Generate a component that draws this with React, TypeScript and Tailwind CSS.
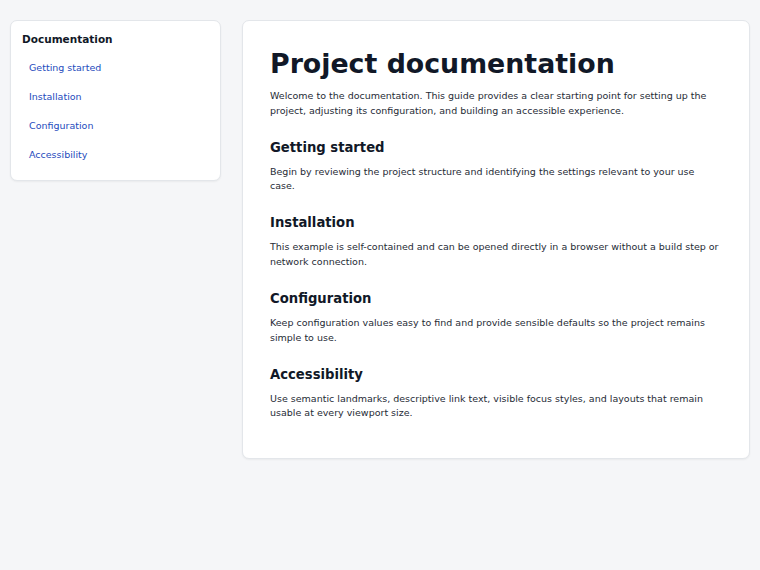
const LINKS = ["Getting started", "Installation", "Configuration", "Accessibility"];

const SECTIONS = [
  {
    title: "Getting started",
    body: "Begin by reviewing the project structure and identifying the settings relevant to your use case.",
  },
  {
    title: "Installation",
    body: "This example is self-contained and can be opened directly in a browser without a build step or network connection.",
  },
  {
    title: "Configuration",
    body: "Keep configuration values easy to find and provide sensible defaults so the project remains simple to use.",
  },
  {
    title: "Accessibility",
    body: "Use semantic landmarks, descriptive link text, visible focus styles, and layouts that remain usable at every viewport size.",
  },
];

export default function App() {
  return (
    <div className="min-h-[570px] bg-[#f5f6f8] px-[10px] pt-[20px] font-['DejaVu_Sans',sans-serif] flex items-start gap-[21px]">
      {/* Sidebar */}
      <nav className="w-[211px] shrink-0 bg-white border border-[#e3e6ea] rounded-[7px] shadow-[0_1px_2px_rgba(0,0,0,0.05)] pt-[11px] pb-[10px] px-[11px]">
        <h2 className="text-[10.5px] leading-[14px] font-bold text-[#111827]">Documentation</h2>
        <ul className="mt-[8px]">
          {LINKS.map((l) => (
            <li key={l}>
              <a href="#" className="h-[29px] flex items-center px-[7px] text-[9.5px] text-[#1e4bbd]">
                {l}
              </a>
            </li>
          ))}
        </ul>
      </nav>

      {/* Main content */}
      <main className="flex-1 bg-white border border-[#e3e6ea] rounded-[7px] shadow-[0_1px_2px_rgba(0,0,0,0.05)] pt-[27px] pb-[37px] pl-[27px] pr-[28px]">
        <h1 className="text-[26.8px] leading-[32px] font-bold text-[#111827]">Project documentation</h1>
        <p className="mt-[9px] text-[9.5px] leading-[14.6px] text-[#262b36]">
          Welcome to the documentation. This guide provides a clear starting point for setting up the project,
          adjusting its configuration, and building an accessible experience.
        </p>
        {SECTIONS.map((s) => (
          <section key={s.title} className="mt-[20.5px]">
            <h2 className="text-[13.2px] leading-[18px] font-bold text-[#111827]">{s.title}</h2>
            <p className="mt-[8px] text-[9.5px] leading-[14.6px] text-[#262b36]">{s.body}</p>
          </section>
        ))}
      </main>
    </div>
  );
}
